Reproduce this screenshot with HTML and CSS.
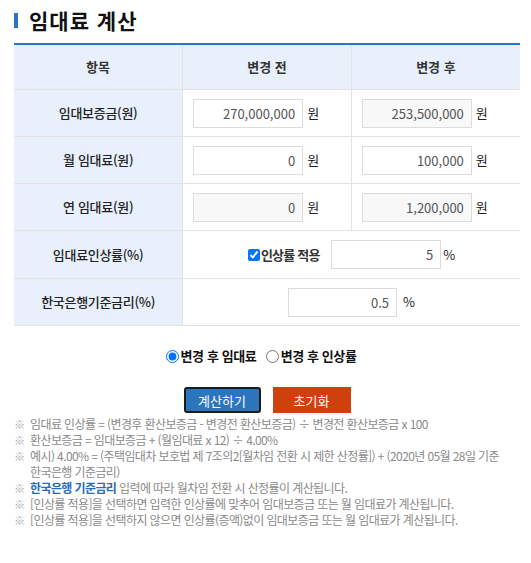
FILE: index.html
```html
<!DOCTYPE html>
<html lang="ko">
<head>
    <meta charset="UTF-8">
    <meta name="viewport" content="width=device-width, initial-scale=1.0">
    <title>임대료 계산</title>
    <link rel="stylesheet" href="styles.css">
</head>
<body>
    <div class="calc">
        <h2 class="calc-title">임대료 계산</h2>

        <table class="calc-table">
            <thead>
                <tr>
                    <th>항목</th>
                    <th>변경 전</th>
                    <th>변경 후</th>
                </tr>
            </thead>
            <tbody>
                <tr>
                    <th class="label">임대보증금(원)</th>
                    <td><input type="text" class="num" value="270,000,000"><span class="unit">원</span></td>
                    <td><input type="text" class="num readonly" value="253,500,000" readonly><span class="unit">원</span></td>
                </tr>
                <tr>
                    <th class="label">월 임대료(원)</th>
                    <td><input type="text" class="num" value="0"><span class="unit">원</span></td>
                    <td><input type="text" class="num" value="100,000"><span class="unit">원</span></td>
                </tr>
                <tr>
                    <th class="label">연 임대료(원)</th>
                    <td><input type="text" class="num readonly" value="0" readonly><span class="unit">원</span></td>
                    <td><input type="text" class="num readonly" value="1,200,000" readonly><span class="unit">원</span></td>
                </tr>
                <tr class="row-rate">
                    <th class="label">임대료인상률(%)</th>
                    <td colspan="2" class="center">
                        <label class="check"><input type="checkbox" checked>인상률 적용</label>
                        <input type="text" class="num" value="5"><span class="unit tight">%</span>
                    </td>
                </tr>
                <tr>
                    <th class="label">한국은행기준금리(%)</th>
                    <td colspan="2" class="center">
                        <input type="text" class="num short" value="0.5"><span class="unit pct">%</span>
                    </td>
                </tr>
            </tbody>
        </table>

        <div class="mode">
            <label><input type="radio" name="mode" checked>변경 후 임대료</label>
            <label><input type="radio" name="mode">변경 후 인상률</label>
        </div>

        <div class="actions">
            <button type="button" class="btn btn-calc">계산하기</button>
            <button type="button" class="btn btn-reset">초기화</button>
        </div>

        <ul class="notes">
            <li><span class="mark">※</span><span>임대료 인상률 = (변경후 환산보증금 - 변경전 환산보증금) ÷ 변경전 환산보증금 x 100</span></li>
            <li><span class="mark">※</span><span>환산보증금 = 임대보증금 + (월임대료 x 12) ÷ 4.00%</span></li>
            <li><span class="mark">※</span><span>예시) 4.00% = (주택임대차 보호법 제 7조의2[월차임 전환 시 제한 산정률]) + (2020년 05월 28일 기준 한국은행 기준금리)</span></li>
            <li><span class="mark">※</span><span><strong>한국은행 기준금리</strong> 입력에 따라 월차임 전환 시 산정률이 계산됩니다.</span></li>
            <li><span class="mark">※</span><span>[인상률 적용]을 선택하면 입력한 인상률에 맞추어 임대보증금 또는 월 임대료가 계산됩니다.</span></li>
            <li><span class="mark">※</span><span>[인상률 적용]을 선택하지 않으면 인상률(증액)없이 임대보증금 또는 월 임대료가 계산됩니다.</span></li>
        </ul>
    </div>
</body>
</html>
```

FILE: styles.css
```css
/* 기본 */
body {
    margin: 0;
    font-family: "Noto Sans CJK KR", "Noto Sans", sans-serif;
    color: #222;
    background: #fff;
}

.calc {
    padding: 8px 11px 0 14px;
}

/* 제목 */
.calc-title {
    display: flex;
    align-items: center;
    gap: 11px;
    margin: 0 0 11px;
    font-size: 21px;
    line-height: 24px;
    font-weight: bold;
    letter-spacing: 1px;
    color: #111;
}

.calc-title::before {
    content: "";
    width: 4px;
    height: 15px;
    background: #2a75bb;
}

/* 표 */
.calc-table {
    width: 100%;
    border-collapse: collapse;
    table-layout: fixed;
    border-top: 2px solid #2a75bb;
    font-size: 13px;
}

.calc-table th,
.calc-table td {
    border: 1px solid #e3e3e3;
    line-height: 18px;
}

.calc-table tr > :first-child {
    border-left: none;
}

.calc-table tr > :last-child {
    border-right: none;
}

.calc-table thead th {
    height: 44px;
    padding: 0;
    background: #e8f0fb;
    font-weight: bold;
    color: #333;
}

.calc-table .label {
    height: 46px;
    padding: 0;
    background: #e8f0fb;
    font-weight: 500;
    letter-spacing: -0.3px;
    color: #222;
}

.calc-table td {
    padding: 0 0 0 10px;
    white-space: nowrap;
}

.calc-table td.center {
    padding: 0;
    text-align: center;
}

.row-rate .label {
    height: 47px;
}

/* 입력 */
.num {
    box-sizing: border-box;
    width: 110px;
    height: 29px;
    padding: 0 7px 0 4px;
    border: 1px solid #dcdcdc;
    background: #fff;
    font-family: inherit;
    font-size: 13px;
    color: #555;
    text-align: right;
    vertical-align: middle;
}

.num.readonly {
    background: #f8f8f8;
}

.num.short {
    width: 109px;
}

.unit {
    margin-left: 4px;
    vertical-align: middle;
    color: #222;
}

.unit.tight {
    margin-left: 2px;
}

.unit.pct {
    margin-left: 6px;
}

.check {
    margin-right: 8px;
    font-weight: bold;
    letter-spacing: -0.8px;
    color: #333;
    vertical-align: middle;
}

.check input {
    margin: 0 1px 0 0;
    width: 12px;
    height: 12px;
    vertical-align: -1px;
}

/* 선택 */
.mode {
    margin-top: 21px;
    padding-right: 12px;
    text-align: center;
    font-size: 13px;
    line-height: 18px;
    font-weight: bold;
    letter-spacing: -0.4px;
    color: #111;
}

.mode label {
    margin: 0 3px;
}

.mode input {
    margin: 0 2px 0 0;
    vertical-align: -2px;
}

/* 버튼 */
.actions {
    display: flex;
    justify-content: center;
    gap: 12px;
    margin-top: 22px;
}

.btn {
    box-sizing: border-box;
    height: 26px;
    padding: 0;
    border: none;
    font-family: inherit;
    font-size: 13px;
    color: #fff;
    cursor: pointer;
}

.btn-calc {
    width: 77px;
    background: #2a75bb;
    border: 2px solid #1b1b1b;
    border-radius: 3px;
}

.btn-reset {
    width: 78px;
    background: #d0400c;
}

/* 안내 */
.notes {
    list-style: none;
    margin: 3px 0 0;
    padding: 0;
    font-size: 12px;
    line-height: 16px;
    letter-spacing: -0.6px;
    word-break: keep-all;
    color: #8a8a8a;
}

.notes li {
    display: flex;
}

.notes .mark {
    flex: none;
    width: 16px;
    color: #aaa;
    font-size: 11px;
}

.notes strong {
    color: #2a6db5;
}
```
